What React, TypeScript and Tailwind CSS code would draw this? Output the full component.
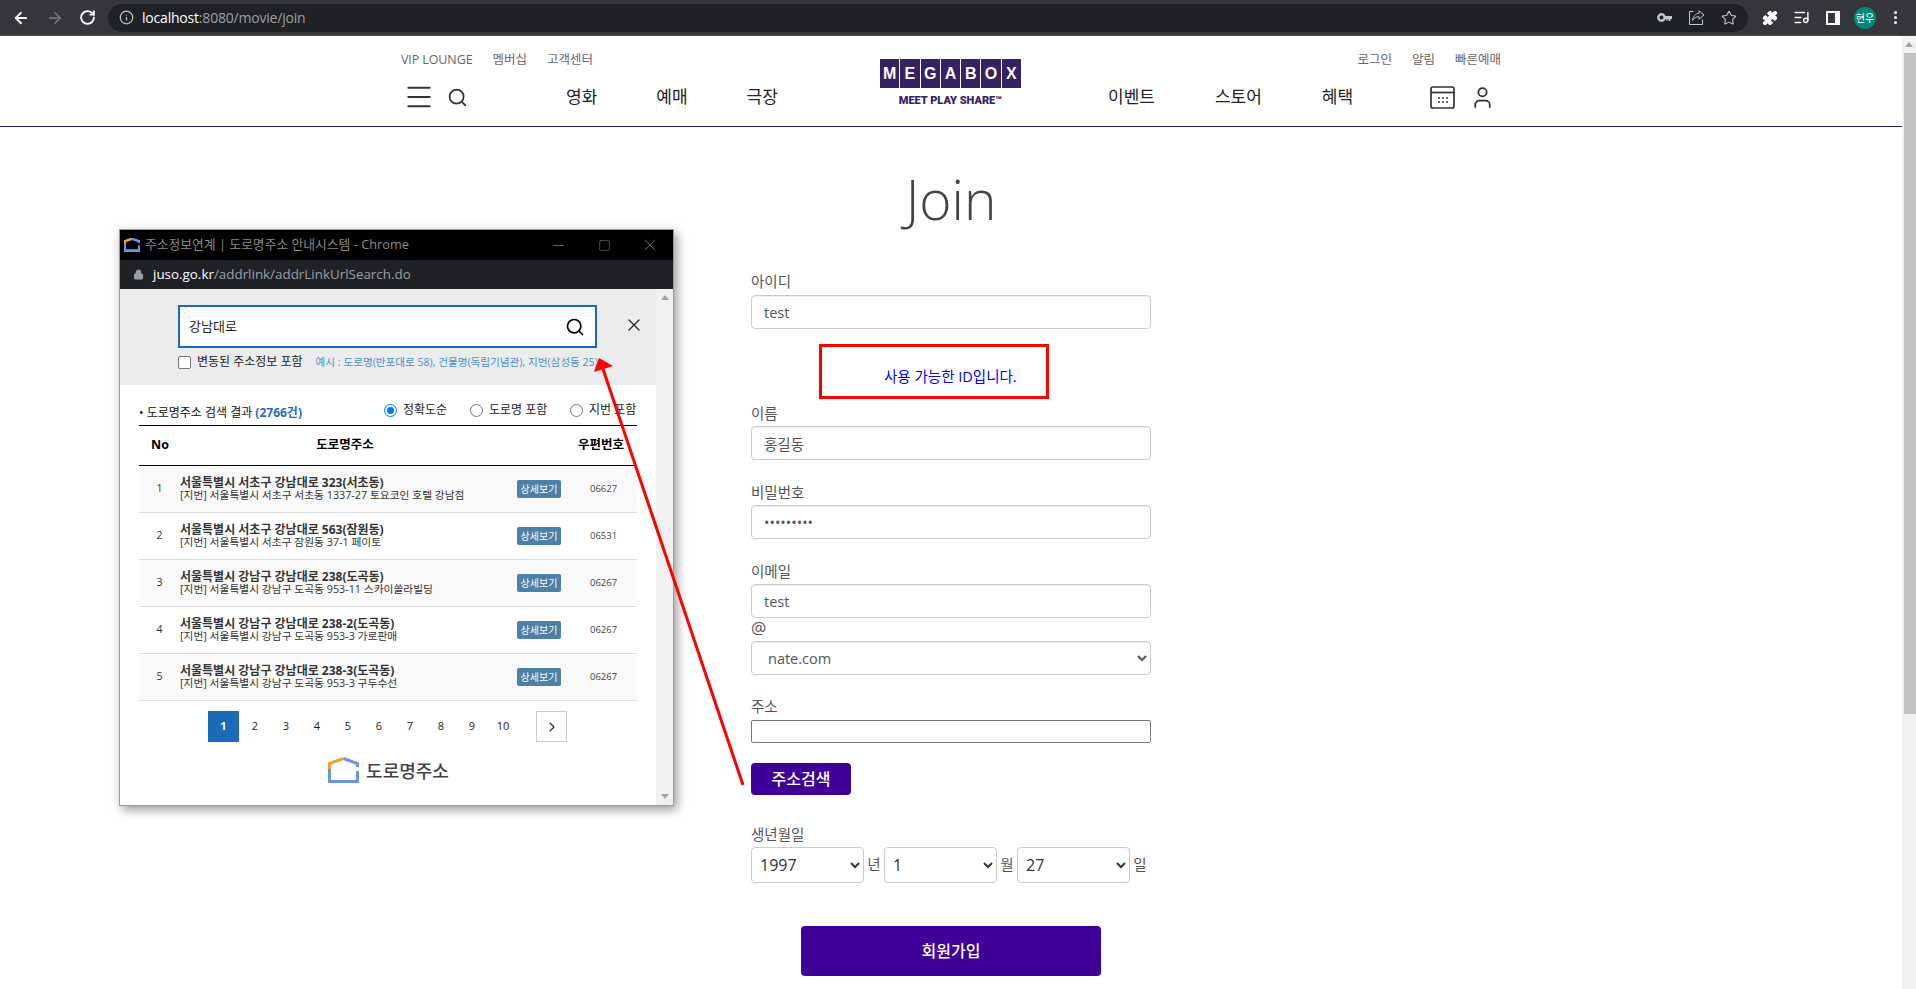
import React from "react";
import { ArrowLeft, ArrowRight, RotateCw, Info, Star, Puzzle, ListMusic, Lock, Minus, Square, X, Search, ChevronRight, Menu, User } from "lucide-react";

const rows = [
  ["1", "서울특별시 서초구 강남대로 323(서초동)", "[지번] 서울특별시 서초구 서초동 1337-27 토요코인 호텔 강남점", "06627", true],
  ["2", "서울특별시 서초구 강남대로 563(잠원동)", "[지번] 서울특별시 서초구 잠원동 37-1 페이토", "06531", false],
  ["3", "서울특별시 강남구 강남대로 238(도곡동)", "[지번] 서울특별시 강남구 도곡동 953-11 스카이쏠라빌딩", "06267", true],
  ["4", "서울특별시 강남구 강남대로 238-2(도곡동)", "[지번] 서울특별시 강남구 도곡동 953-3 가로판매", "06267", false],
  ["5", "서울특별시 강남구 강남대로 238-3(도곡동)", "[지번] 서울특별시 강남구 도곡동 953-3 구두수선", "06267", true],
] as const;

function House({ size, weight = 3 }: { size: number; weight?: number }) {
  return (
    <svg width={size} height={size * 0.84} viewBox="0 0 31 26" fill="none">
      <path d="M1.5 12V6.5L15.5 1.5" stroke="#f0a030" strokeWidth={weight} />
      <path d="M15.5 1.5L29.5 6.5V10M29.5 14V24.5H1.5V12" stroke="#6a96e0" strokeWidth={weight} />
    </svg>
  );
}

function ChromeBar() {
  return (
    <div className="h-[36px] shrink-0 bg-[#35363a] border-b border-[#4a4b4e] flex items-center text-white">
      <ArrowLeft size={18} strokeWidth={2.4} className="ml-[12px] text-white" />
      <ArrowRight size={18} strokeWidth={2} className="ml-[16px] text-[#7c7d80]" />
      <RotateCw size={17} strokeWidth={2.6} className="ml-[15px] text-white" />
      <div className="ml-[12px] w-[1640px] h-[28px] bg-[#202124] rounded-full flex items-center">
        <Info size={15} className="ml-[11px] text-[#c4c7ca]" />
        <div className="ml-[8px] text-[14px] tracking-[-0.2px] font-['Open_Sans',sans-serif]">
          <span className="text-white">localhost</span>
          <span className="text-[#9aa0a6]">:8080/movie/join</span>
        </div>
        <div className="ml-auto flex items-center">
          <svg width="15" height="9" viewBox="0 0 15 9" className="mr-[17px]">
            <circle cx="4.5" cy="4.5" r="3.2" fill="none" stroke="#c4c7ca" strokeWidth="2.4" />
            <path d="M8 3h7v3h-1.5v2h-2V6h-1v1.5h-1.5V6H8z" fill="#c4c7ca" />
          </svg>
          <svg width="16" height="15" viewBox="0 0 16 15" fill="none" stroke="#c4c7ca" className="mr-[16px]">
            <path d="M4.5 1.5H.5v13h13V9.5" />
            <path d="M10 .8l5 4.2-5 4.2V6.8C7 6.6 5 8 3.6 10.4 4 6.6 6.4 3.6 10 3.2z" />
          </svg>
          <Star size={16} strokeWidth={1.6} className="mr-[11px] text-[#c4c7ca]" />
        </div>
      </div>
      <Puzzle size={16} fill="white" strokeWidth={1.5} className="ml-[14px] text-white" />
      <ListMusic size={17} strokeWidth={2} className="ml-[15px] text-white" />
      <div className="ml-[16px] w-[14px] h-[14px] bg-white p-[2px] pr-[5px]">
        <div className="w-full h-full bg-[#35363a]" />
      </div>
      <div className="ml-[14px] w-[22px] h-[22px] rounded-full bg-[#00897b] flex items-center justify-center text-[10px] text-white font-['Noto_Sans_CJK_KR',sans-serif]">
        현우
      </div>
      <div className="ml-[18px] flex flex-col gap-[2px]">
        <span className="w-[3px] h-[3px] bg-white rounded-full" />
        <span className="w-[3px] h-[3px] bg-white rounded-full" />
        <span className="w-[3px] h-[3px] bg-white rounded-full" />
      </div>
    </div>
  );
}

function SiteHeader() {
  return (
    <header className="h-[91px] border-b border-[#2d1a5e]">
      <div className="w-[1100px] mx-auto flex">
        <div className="w-[479px]">
          <div className="flex gap-[20px] pt-[15px] text-[12.5px] leading-[18px] text-[#666]">
            <span className="tracking-[-0.1px]">VIP LOUNGE</span><span>멤버십</span><span>고객센터</span>
          </div>
          <div className="flex items-center mt-[13px] h-[30px]">
            <Menu size={32} strokeWidth={1.5} className="ml-[2px] text-[#333]" />
            <Search size={21} strokeWidth={2} className="ml-[12px] text-[#333]" />
            <nav className="ml-[98px] flex gap-[59px] text-[17px] text-[#222]">
              <span>영화</span><span>예매</span><span>극장</span>
            </nav>
          </div>
        </div>
        <div className="w-[141px] pt-[23px] flex flex-col items-center">
          <div className="flex gap-[1px] w-[141px] h-[29px]">
            {"MEGABOX".split("").map((c) => (
              <span key={c} className="flex-1 bg-[#352263] text-white text-[16px] font-bold font-['Liberation_Sans',sans-serif] flex items-center justify-center">{c}</span>
            ))}
          </div>
          <div className="mt-[6px] text-[11px] leading-[13px] font-black text-[#352263] font-['Roboto',sans-serif] whitespace-nowrap">MEET PLAY SHARE™</div>
        </div>
        <div className="flex-1">
          <div className="flex justify-end gap-[20px] pt-[15px] text-[12.5px] leading-[18px] text-[#666]">
            <span>로그인</span><span>알림</span><span>빠른예매</span>
          </div>
          <div className="flex items-center mt-[13px] h-[30px]">
            <nav className="ml-[87px] flex gap-[60px] text-[17px] text-[#222]">
              <span>이벤트</span><span>스토어</span><span>혜택</span>
            </nav>
            <svg width="25" height="23" viewBox="0 0 25 23" fill="none" stroke="#333" strokeWidth="1.7" className="ml-[77px]">
              <rect x="1" y="1" width="23" height="21" rx="2" />
              <path d="M1 6.5h23" />
              <path d="M8 12h2M12 12h2M16 12h2M8 16h2M12 16h2M16 16h2" strokeWidth="1.5" />
            </svg>
            <User size={25} strokeWidth={1.7} className="ml-[15px] text-[#333]" />
          </div>
        </div>
      </div>
    </header>
  );
}

const labelCls = "block text-[14.5px] leading-[20px] text-[#555]";
const inputCls = "block w-full h-[34px] rounded-[4px] border border-[#ccc] px-[12px] text-[14.5px] text-[#555] shadow-[inset_0_1px_1px_rgba(0,0,0,0.075)]";
const dateCls = "w-[113px] h-[36px] rounded-[4px] border border-[#ccc] pl-[4px] text-[16px] text-[#333]";

function JoinForm() {
  return (
    <main className="w-[400px] mx-auto">
      <h1 className="text-center text-[55px] leading-[72px] font-[350] text-[#444] mt-[36px] -mx-[50px]">Join</h1>
      <label className={`${labelCls} mt-[37px] mb-[3px]`}>아이디</label>
      <input className={inputCls} defaultValue="test" />
      <div className="ml-[68px] mt-[15px] w-[230px] h-[55px] border-[3px] border-[#ff0000] pl-[62px] pt-[20px] text-[14.5px] leading-[20px] text-[#0000ff] whitespace-nowrap">사용 가능한 ID입니다.</div>
      <label className={`${labelCls} mt-[5px] mb-[2px]`}>이름</label>
      <input className={inputCls} defaultValue="홍길동" />
      <label className={`${labelCls} mt-[23px] mb-[2px]`}>비밀번호</label>
      <input className={inputCls} type="password" defaultValue="123456789" />
      <label className={`${labelCls} mt-[23px] mb-[2px]`}>이메일</label>
      <input className={inputCls} defaultValue="test" />
      <div className="text-[17px] leading-[20px] text-[#555] mb-[3px]">@</div>
      <select className={inputCls} defaultValue="nate.com">
        <option>nate.com</option>
      </select>
      <label className={`${labelCls} mt-[22px] mb-[3px]`}>주소</label>
      <input className="block w-full h-[23px] rounded-[2px] border border-[#767676]" />
      <button className="block mt-[20px] w-[100px] h-[32px] rounded-[4px] bg-[#3f0097] text-white text-[16px] font-medium">주소검색</button>
      <label className={`${labelCls} mt-[30px] mb-[2px]`}>생년월일</label>
      <div className="flex items-center text-[14.5px] text-[#555]">
        <select className={dateCls} defaultValue="1997"><option>1997</option></select>
        <span className="w-[20px] text-center">년</span>
        <select className={dateCls} defaultValue="1"><option>1</option></select>
        <span className="w-[20px] text-center">월</span>
        <select className={dateCls} defaultValue="27"><option>27</option></select>
        <span className="w-[20px] text-center">일</span>
      </div>
      <button className="block mx-auto mt-[43px] w-[300px] h-[50px] rounded-[4px] bg-[#3f0097] text-white text-[16px] font-medium">회원가입</button>
    </main>
  );
}

function Radio({ on, label, w }: { on?: boolean; label: string; w: string }) {
  return (
    <div className={`flex items-center ${w}`}>
      <span className={`w-[13px] h-[13px] rounded-full border flex items-center justify-center bg-white ${on ? "border-[#0075ff]" : "border-[#767676]"}`}>
        {on && <span className="w-[7px] h-[7px] rounded-full bg-[#0075ff]" />}
      </span>
      <span className="ml-[6px] text-[12px] text-[#222] whitespace-nowrap">{label}</span>
    </div>
  );
}

function Popup() {
  return (
    <section className="absolute left-[119px] top-[193px] w-[555px] h-[577px] bg-white border border-[#9a9a9a] shadow-[3px_4px_10px_rgba(0,0,0,0.4)] flex flex-col">
      <div className="h-[30px] bg-black flex items-center text-[#8a8a8a] text-[12.8px] shrink-0">
        <div className="ml-[4px] mr-[5px]"><House size={16} weight={5} /></div>
        <span>주소정보연계 | 도로명주소 안내시스템 - Chrome</span>
        <Minus size={17} strokeWidth={1} className="ml-auto mr-[31px]" />
        <Square size={13} strokeWidth={1} className="mr-[29px]" />
        <X size={20} strokeWidth={0.9} className="mr-[13px]" />
      </div>
      <div className="h-[29px] bg-[#202124] flex items-center shrink-0 text-[13.4px]">
        <Lock size={11} fill="#9aa0a6" className="ml-[13px] text-[#9aa0a6]" />
        <span className="ml-[9px] text-white">juso.go.kr</span>
        <span className="text-[#9aa0a6]">/addrlink/addrLinkUrlSearch.do</span>
      </div>
      <div className="flex flex-1 min-h-0">
        <div className="flex-1 flex flex-col">
          <div className="h-[96px] bg-[#ececec] pl-[58px] pt-[16px] relative shrink-0">
            <div className="w-[419px] h-[43px] bg-white border-2 border-[#1b6ab8] flex items-center pl-[9px] pr-[10px] text-[13px] text-[#222]">
              강남대로
              <Search size={20} strokeWidth={2} className="ml-auto text-black" />
            </div>
            <X size={20} strokeWidth={1.5} className="absolute left-[504px] top-[26px] text-[#222]" />
            <div className="flex items-center mt-[7px]">
              <span className="w-[13px] h-[13px] rounded-[2px] border border-[#767676] bg-white" />
              <span className="ml-[6px] text-[12px] text-[#222] leading-[14px]">변동된 주소정보 포함</span>
              <span className="ml-[13px] text-[10.6px] text-[#4a90d0] leading-[14px] whitespace-nowrap">예시 : 도로명(반포대로 58), 건물명(독립기념관), 지번(삼성동 25)</span>
            </div>
          </div>
          <div className="px-[19px] flex-1 flex flex-col">
            <div className="h-[41px] flex items-end pb-[6px] border-b border-black">
              <span className="-mb-[2px] text-[12px] text-[#111] leading-[16px] whitespace-nowrap">• 도로명주소 검색 결과 <b className="text-[#2a6bc0]">(2766건)</b></span>
              <div className="ml-auto flex">
                <Radio on label="정확도순" w="w-[86px]" />
                <Radio label="도로명 포함" w="w-[100px]" />
                <Radio label="지번 포함" w="w-[67px]" />
              </div>
            </div>
            <div className="h-[40px] flex items-center border-b border-black text-[12.5px] font-bold text-black">
              <span className="w-[42px] text-center">No</span>
              <span className="w-[328px] text-center">도로명주소</span>
              <span className="w-[127px] pl-[69px] whitespace-nowrap">우편번호</span>
            </div>
            {rows.map(([n, t, s, z, shade]) => (
              <div key={n} className={`h-[47px] flex items-center border-b border-[#ddd] ${shade ? "bg-[#f9f9f9]" : "bg-white"}`}>
                <span className="w-[41px] text-center text-[10.5px] text-[#333]">{n}</span>
                <div className="w-[337px] flex flex-col text-[#333] whitespace-nowrap">
                  <span className="text-[12px] leading-[13px] font-bold">{t}</span>
                  <span className="text-[10.75px] leading-[13px]">{s}</span>
                </div>
                <span className="w-[44px] h-[18px] rounded-[2px] bg-[#4b80a8] text-white text-[10px] leading-[18px] text-center">상세보기</span>
                <span className="ml-[29px] text-[9.5px] text-[#444]">{z}</span>
              </div>
            ))}
            <div className="flex mt-[10px] ml-[69px] h-[31px] text-[11px] text-[#222]">
              <span className="w-[31px] h-[31px] bg-[#1b6ab8] text-white font-bold flex items-center justify-center">1</span>
              {["2", "3", "4", "5", "6", "7", "8", "9", "10"].map((p) => (
                <span key={p} className="w-[31px] pl-[1px] flex items-center justify-center">{p}</span>
              ))}
              <span className="ml-[18px] w-[31px] border border-[#ccc] flex items-center justify-center">
                <ChevronRight size={16} strokeWidth={1.6} className="text-[#222]" />
              </span>
            </div>
            <div className="flex items-center justify-center mt-[13px] pl-[1px]">
              <House size={31} />
              <span className="ml-[7px] pt-[3px] text-[18px] font-medium text-[#444]">도로명주소</span>
            </div>
          </div>
        </div>
        <div className="w-[17px] bg-[#f1f1f1] flex flex-col items-center justify-between py-[6px] text-[#a3a3a3]">
          <span className="w-0 h-0 border-x-[4px] border-x-transparent border-b-[5px] border-b-[#a3a3a3]" />
          <span className="w-0 h-0 border-x-[4px] border-x-transparent border-t-[5px] border-t-[#a3a3a3]" />
        </div>
      </div>
    </section>
  );
}

export default function App() {
  return (
    <div className="h-[989px] overflow-hidden flex flex-col bg-white font-['Open_Sans','Noto_Sans_CJK_KR',sans-serif]">
      <ChromeBar />
      <div className="flex flex-1 min-h-0">
        <div className="relative flex-1 min-w-0">
          <SiteHeader />
          <JoinForm />
          <Popup />
          <svg className="absolute left-0 top-0 pointer-events-none" width="1902" height="953" viewBox="0 0 1902 953">
            <path d="M743 749L603 333" stroke="#ff0000" strokeWidth="3" fill="none" />
            <path d="M599 322L594 336L613 330Z" fill="#ff0000" />
          </svg>
        </div>
        <div className="w-[14px] shrink-0 bg-[#f1f1f1] flex flex-col">
          <div className="h-[17px] flex items-center justify-center">
            <span className="w-0 h-0 border-x-[4px] border-x-transparent border-b-[5px] border-b-[#a3a3a3]" />
          </div>
          <div className="ml-[2px] h-[661px] bg-[#c1c1c1]" />
        </div>
      </div>
    </div>
  );
}
